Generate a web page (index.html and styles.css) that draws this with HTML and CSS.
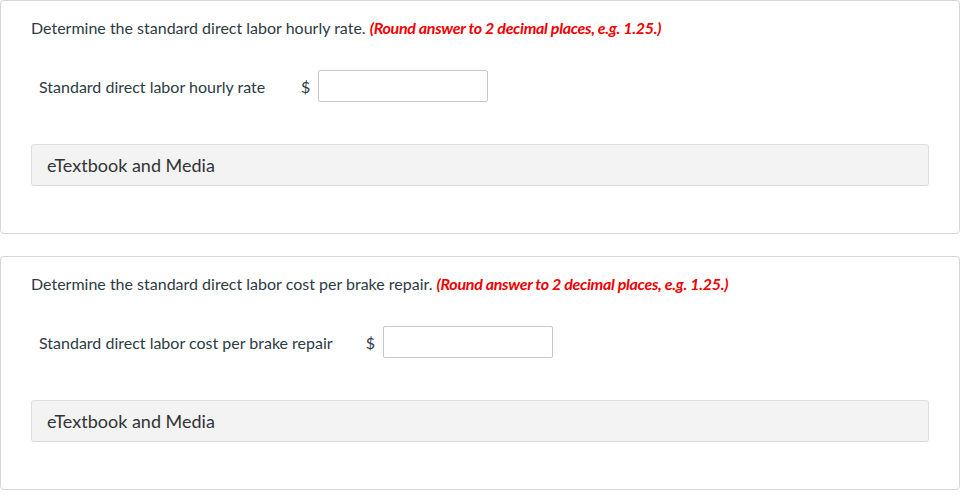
FILE: index.html
```html
<!DOCTYPE html>
<html>
<head>
<meta charset="utf-8">
<link rel="stylesheet" href="styles.css">
</head>
<body>
<div class="page">
  <section class="card">
    <p class="question">Determine the standard direct labor hourly rate. <em class="hint">(Round answer to 2 decimal places, e.g. 1.25.)</em></p>
    <div class="answer-row">
      <span class="label">Standard direct labor hourly rate</span>
      <span class="currency">$</span>
      <input class="field" type="text">
    </div>
    <div class="media">eTextbook and Media</div>
  </section>
  <section class="card">
    <p class="question">Determine the standard direct labor cost per brake repair. <em class="hint">(Round answer to 2 decimal places, e.g. 1.25.)</em></p>
    <div class="answer-row">
      <span class="label">Standard direct labor cost per brake repair</span>
      <span class="currency">$</span>
      <input class="field" type="text">
    </div>
    <div class="media">eTextbook and Media</div>
  </section>
</div>
</body>
</html>
```
FILE: styles.css
```css
html, body {
  margin: 0;
  padding: 0;
  background: #fff;
}
body {
  font-family: Lato, "Open Sans", sans-serif;
  color: #2d3b45;
}
.page {
  display: flex;
  flex-direction: column;
  gap: 22px;
  width: 960px;
}
.card {
  box-sizing: border-box;
  border: 1px solid #d6d6d6;
  border-radius: 4px;
  padding: 16px 30px 47px 30px;
  height: 234px;
}
.question {
  margin: 0;
  font-size: 16px;
  line-height: 21px;
}
.hint {
  color: #f00000;
  font-weight: bold;
  font-style: italic;
  letter-spacing: -0.3px;
}
.answer-row {
  display: flex;
  align-items: center;
  margin-top: 32px;
  padding-left: 8px;
  height: 32px;
}
.label {
  font-size: 16px;
  min-width: 229px;
}
.currency {
  font-size: 16px;
  margin-left: 33px;
  margin-right: 8px;
}
.field {
  box-sizing: border-box;
  width: 170px;
  height: 32px;
  margin: 0;
  border: 1px solid #c8c8c8;
  border-radius: 2px;
  background: #fff;
}
.media {
  box-sizing: border-box;
  margin-top: 42px;
  height: 42px;
  background: #f3f3f3;
  border: 1px solid #dcdcdc;
  border-radius: 3px;
  padding-left: 15px;
  display: flex;
  align-items: center;
  font-size: 18px;
  color: #333;
}
```
